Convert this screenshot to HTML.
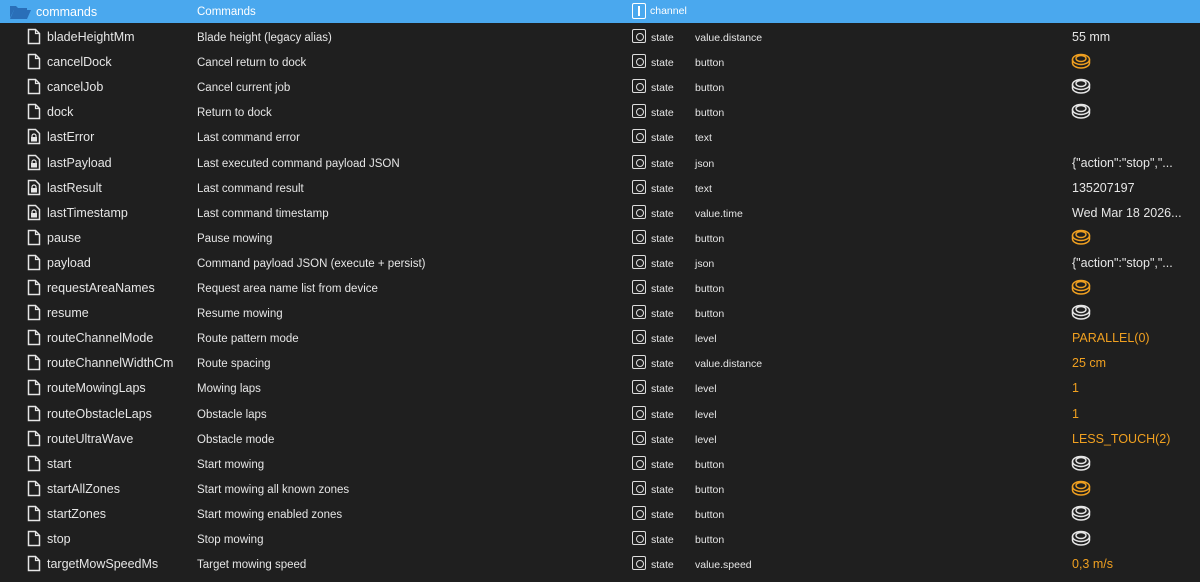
<!DOCTYPE html>
<html><head><meta charset="utf-8"><style>
*{margin:0;padding:0;box-sizing:border-box}
body{width:1200px;height:582px;background:#1f1f1f;font-family:"Liberation Sans",sans-serif;color:#e6e6e6;position:relative;overflow:hidden}
.hdr{position:absolute;left:0;top:0;width:1200px;height:23px;background:#4aa8ee;color:#fff}
.r{position:absolute;left:0;width:1200px;height:25px}
.t{position:absolute;white-space:nowrap;line-height:16px}
.n{left:47px;font-size:12.5px;top:5px}
.d{left:197px;font-size:11.5px;top:6px}
.s{left:651px;font-size:10.5px;top:6px}
.ty{left:695px;font-size:10.5px;top:6px}
.v{left:1072px;font-size:12.5px;top:5px}
.o{color:#f0a020}
.fi{position:absolute;left:27px;top:4px}
.si{position:absolute;left:632px;top:5px;width:14px;height:14px;border:1px solid #ddd;border-radius:2px}
.si:after{content:"";position:absolute;left:3px;top:3px;width:6px;height:6px;border:1px solid #ddd;border-radius:50%}
.bt{position:absolute;left:1071px;top:3px}
</style></head><body>
<div class="hdr">
<svg style="position:absolute;left:9px;top:4px" width="22" height="15" viewBox="0 0 22 15"><path d="M1 2h6l2 2h9v2H5L1 14Z" fill="#2a6fb8"/><path d="M5 6h17l-4 9H1Z" fill="#2a6fb8"/></svg>
<span class="t" style="left:36px;top:4px;font-size:12.5px">commands</span>
<span class="t" style="left:197px;top:4px;font-size:11.5px">Commands</span>
<div style="position:absolute;left:632px;top:3px;width:14px;height:16px;border:1px solid #fff;border-radius:2px"><div style="position:absolute;left:5px;top:2px;width:2px;height:10px;background:#fff"></div></div>
<span class="t" style="left:650px;top:3px;font-size:10.5px">channel</span>
</div>
<div id="rows"></div>
<script>
const F='<svg class="fi" width="14" height="17" viewBox="0 0 14 17"><path d="M1.5 1.5h7l4 4v10h-11z" fill="none" stroke="#e6e6e6" stroke-width="1.5"/><path d="M8.5 1.5v4h4" fill="none" stroke="#e6e6e6" stroke-width="1.2"/></svg>';
const L='<svg class="fi" width="14" height="17" viewBox="0 0 14 17"><path d="M1.5 1.5h7l4 4v10h-11z" fill="none" stroke="#e6e6e6" stroke-width="1.5"/><rect x="4" y="9" width="6" height="4.5" fill="#e6e6e6"/><path d="M5 9.5V8a2 2 0 0 1 4 0v1.5" fill="none" stroke="#e6e6e6" stroke-width="1.2"/></svg>';
function B(c){return '<svg class="bt" width="20" height="18" viewBox="0 0 20 18"><path d="M1.5 7.5v3.5c0 2.7 3.8 5 8.5 5s8.5-2.3 8.5-5V7.5" fill="none" stroke="'+c+'" stroke-width="1.5"/><ellipse cx="10" cy="7.5" rx="8.5" ry="5" fill="none" stroke="'+c+'" stroke-width="1.5"/><ellipse cx="10" cy="6.5" rx="5" ry="3" fill="none" stroke="'+c+'" stroke-width="1.4"/></svg>';}
const O='#f0a020',W='#e6e6e6';
const d=[
['bladeHeightMm','Blade height (legacy alias)','value.distance','55 mm',0,0],
['cancelDock','Cancel return to dock','button',O,0,1],
['cancelJob','Cancel current job','button',W,0,1],
['dock','Return to dock','button',W,0,1],
['lastError','Last command error','text','',1,0],
['lastPayload','Last executed command payload JSON','json','{"action":"stop","...',1,0],
['lastResult','Last command result','text','135207197',1,0],
['lastTimestamp','Last command timestamp','value.time','Wed Mar 18 2026...',1,0],
['pause','Pause mowing','button',O,0,1],
['payload','Command payload JSON (execute + persist)','json','{"action":"stop","...',0,0],
['requestAreaNames','Request area name list from device','button',O,0,1],
['resume','Resume mowing','button',W,0,1],
['routeChannelMode','Route pattern mode','level','PARALLEL(0)',0,2],
['routeChannelWidthCm','Route spacing','value.distance','25 cm',0,2],
['routeMowingLaps','Mowing laps','level','1',0,2],
['routeObstacleLaps','Obstacle laps','level','1',0,2],
['routeUltraWave','Obstacle mode','level','LESS_TOUCH(2)',0,2],
['start','Start mowing','button',W,0,1],
['startAllZones','Start mowing all known zones','button',O,0,1],
['startZones','Start mowing enabled zones','button',W,0,1],
['stop','Stop mowing','button',W,0,1],
['targetMowSpeedMs','Target mowing speed','value.speed','0,3 m/s',0,2]];
let h='';
d.forEach((r,i)=>{
 const top=24+i*25.1;
 let v=r[5]==1?B(r[3]):'<span class="t v'+(r[5]==2?' o':'')+'">'+r[3].replace(/</g,'&lt;')+'</span>';
 h+='<div class="r" style="top:'+top+'px">'+(r[4]?L:F)+'<span class="t n">'+r[0]+'</span><span class="t d">'+r[1]+'</span><div class="si"></div><span class="t s">state</span><span class="t ty">'+r[2]+'</span>'+v+'</div>';
});
document.getElementById('rows').innerHTML=h;
</script>
</body></html>
